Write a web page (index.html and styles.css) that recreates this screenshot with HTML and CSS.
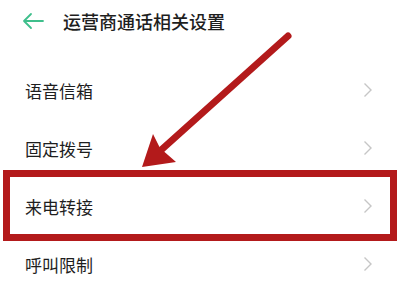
FILE: index.html
```html
<!DOCTYPE html>
<html lang="zh-CN">
<head>
<meta charset="utf-8">
<link rel="stylesheet" href="styles.css">
</head>
<body>
<div class="screen">
  <header class="topbar">
    <svg class="back" width="22" height="18" viewBox="0 0 22 18">
      <path d="M2 9 H21 M9 2 L2 9 L9 16" fill="none" stroke="#3fbf8c" stroke-width="1.8" stroke-linecap="round" stroke-linejoin="round"/>
    </svg>
    <h1 class="title">运营商通话相关设置</h1>
  </header>
  <ul class="list">
    <li class="row"><span class="label">语音信箱</span><svg class="chev" width="10" height="16" viewBox="0 0 10 16"><polyline points="1.5,1.5 8,8 1.5,14.5" fill="none" stroke="#c6c6c6" stroke-width="1.4"/></svg></li>
    <li class="row"><span class="label">固定拨号</span><svg class="chev" width="10" height="16" viewBox="0 0 10 16"><polyline points="1.5,1.5 8,8 1.5,14.5" fill="none" stroke="#c6c6c6" stroke-width="1.4"/></svg></li>
    <li class="row"><span class="label">来电转接</span><svg class="chev" width="10" height="16" viewBox="0 0 10 16"><polyline points="1.5,1.5 8,8 1.5,14.5" fill="none" stroke="#c6c6c6" stroke-width="1.4"/></svg></li>
    <li class="row"><span class="label">呼叫限制</span><svg class="chev" width="10" height="16" viewBox="0 0 10 16"><polyline points="1.5,1.5 8,8 1.5,14.5" fill="none" stroke="#c6c6c6" stroke-width="1.4"/></svg></li>
  </ul>
  <div class="highlight"></div>
  <svg class="pointer" width="400" height="300" viewBox="0 0 400 300">
    <line x1="288" y1="36" x2="160" y2="151" stroke="#b31a1b" stroke-width="7" stroke-linecap="round"/>
    <polygon points="142,167 153,134 160,148 176,162" fill="#b31a1b"/>
  </svg>
</div>
</body>
</html>
```

FILE: styles.css
```css
html, body {
  margin: 0;
  padding: 0;
  background: #ffffff;
}
.screen {
  position: relative;
  width: 400px;
  height: 300px;
  overflow: hidden;
  font-family: "Noto Sans CJK SC", "Noto Sans", sans-serif;
  color: #1e1e1e;
}
.topbar {
  display: flex;
  align-items: center;
  height: 42px;
  padding-left: 22px;
}
.back {
  display: block;
}
.title {
  margin: 0 0 0 19px;
  font-size: 18px;
  font-weight: 500;
  line-height: 1;
}
.list {
  list-style: none;
  margin: 0;
  padding: 19px 0 0 0;
}
.row {
  display: flex;
  align-items: center;
  justify-content: space-between;
  height: 58px;
  padding: 0 27px 0 25px;
}
.label {
  font-size: 17px;
  line-height: 1;
}
.chev {
  display: block;
}
.highlight {
  position: absolute;
  left: 3px;
  top: 170px;
  width: 380px;
  height: 57px;
  border: 7px solid #b31a1b;
}
.pointer {
  position: absolute;
  left: 0;
  top: 0;
}
```
